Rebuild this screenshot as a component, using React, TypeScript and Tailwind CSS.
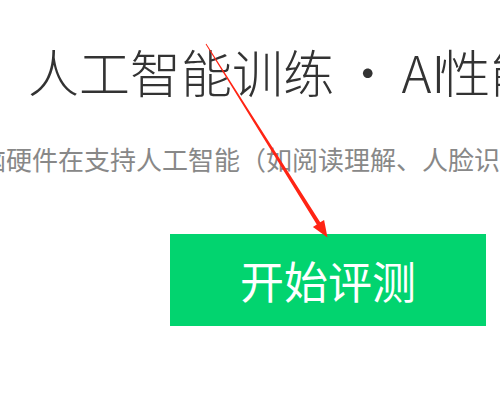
import React from "react";

export default function App() {
  return (
    <div className="relative w-[500px] h-[400px] overflow-hidden bg-white" style={{ fontFamily: '"Noto Sans CJK SC", "Noto Sans", sans-serif' }}>
      <div className="pt-[46px] pl-[28px] whitespace-nowrap text-[51px] leading-none font-light text-[#333333] [word-spacing:-3px]">
        人工智能训练 · <span className="mr-[-6px]">AI</span>性能测试
      </div>
      <div className="mt-[49px] ml-[-20px] whitespace-nowrap text-[26px] leading-none text-[#888888]">
        脑硬件在支持人工智能（如阅读理解、人脸识别等）
      </div>
      <div className="mt-[62px] ml-[170px] w-[316px] h-[92px] bg-[#02d46f] flex items-center justify-center">
        <span className="text-[44px] leading-none text-white">开始评测</span>
      </div>
      <svg className="absolute left-0 top-0 pointer-events-none" width="500" height="400" viewBox="0 0 500 400">
        <polygon
          points="206.4,43.7 320.2,222.3 324.1,219.9 327.5,237.5 312.9,226.9 316.8,224.5 205.6,44.3"
          fill="#ff2414"
        />
      </svg>
    </div>
  );
}
